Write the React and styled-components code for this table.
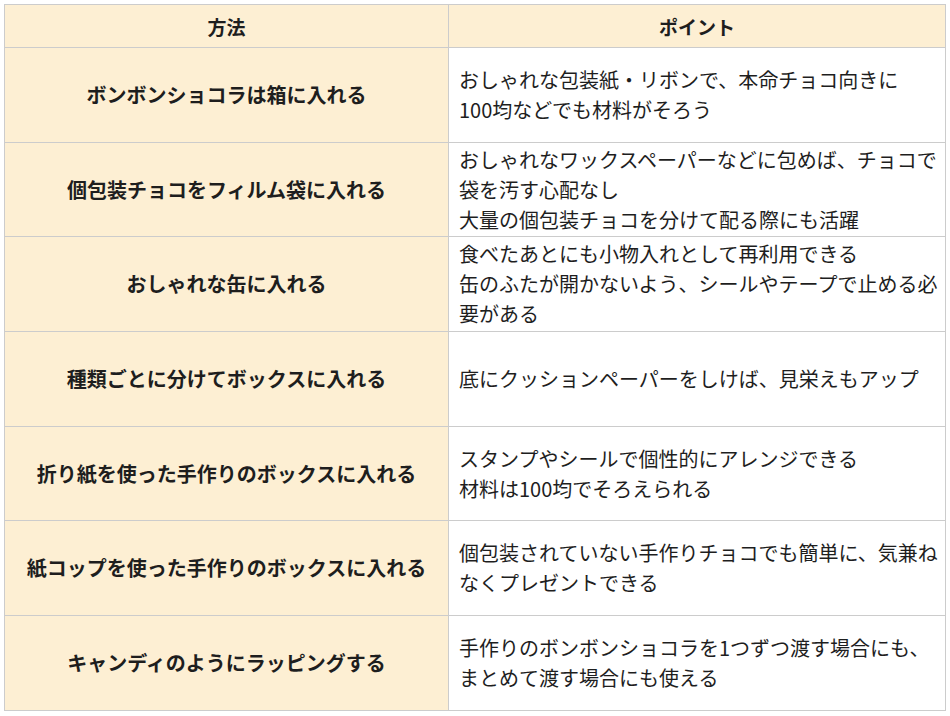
import React from 'react'
import styled, { createGlobalStyle } from 'styled-components'

const GlobalStyle = createGlobalStyle`
  body {
    margin: 0;
    background: #ffffff;
    font-family: "Noto Sans CJK JP", "Noto Sans", sans-serif;
    color: #1e1e1e;
  }
`

const Page = styled.div`
  padding: 4px;
`

const Table = styled.table`
  width: 942px;
  border-collapse: collapse;
  table-layout: fixed;
`

const HeadCell = styled.th`
  height: 42px;
  padding: 0 10px;
  background: #fdefd3;
  border: 1px solid #cccccc;
  font-size: 19px;
  font-weight: 700;
  text-align: center;
  vertical-align: middle;
`

const MethodCell = styled.td`
  height: 93.7px;
  padding: 0 6px;
  background: #fdefd3;
  border: 1px solid #cccccc;
  font-size: 20px;
  font-weight: 700;
  line-height: 30px;
  text-align: center;
  vertical-align: middle;
  white-space: nowrap;
`

const PointCell = styled.td`
  height: 93.7px;
  padding: 0 2px 0 10px;
  background: #ffffff;
  border: 1px solid #cccccc;
  font-size: 20px;
  line-height: 30px;
  vertical-align: middle;
  overflow: hidden;
`

const Line = styled.div`
  white-space: nowrap;
`

const rows = [
  {
    method: 'ボンボンショコラは箱に入れる',
    points: ['おしゃれな包装紙・リボンで、本命チョコ向きに', '100均などでも材料がそろう'],
  },
  {
    method: '個包装チョコをフィルム袋に入れる',
    points: [
      'おしゃれなワックスペーパーなどに包めば、チョコで',
      '袋を汚す心配なし',
      '大量の個包装チョコを分けて配る際にも活躍',
    ],
  },
  {
    method: 'おしゃれな缶に入れる',
    points: [
      '食べたあとにも小物入れとして再利用できる',
      '缶のふたが開かないよう、シールやテープで止める必',
      '要がある',
    ],
  },
  {
    method: '種類ごとに分けてボックスに入れる',
    points: ['底にクッションペーパーをしけば、見栄えもアップ'],
  },
  {
    method: '折り紙を使った手作りのボックスに入れる',
    points: ['スタンプやシールで個性的にアレンジできる', '材料は100均でそろえられる'],
  },
  {
    method: '紙コップを使った手作りのボックスに入れる',
    points: ['個包装されていない手作りチョコでも簡単に、気兼ね', 'なくプレゼントできる'],
  },
  {
    method: 'キャンディのようにラッピングする',
    points: ['手作りのボンボンショコラを1つずつ渡す場合にも、', 'まとめて渡す場合にも使える'],
  },
]

const App = () => {
  return (
    <Page>
      <GlobalStyle />
      <Table>
        <colgroup>
          <col style={{ width: '444px' }} />
          <col />
        </colgroup>
        <thead>
          <tr>
            <HeadCell>方法</HeadCell>
            <HeadCell>ポイント</HeadCell>
          </tr>
        </thead>
        <tbody>
          {rows.map((row) => (
            <tr key={row.method}>
              <MethodCell>{row.method}</MethodCell>
              <PointCell>
                {row.points.map((p) => (
                  <Line key={p}>{p}</Line>
                ))}
              </PointCell>
            </tr>
          ))}
        </tbody>
      </Table>
    </Page>
  )
}

export default App
